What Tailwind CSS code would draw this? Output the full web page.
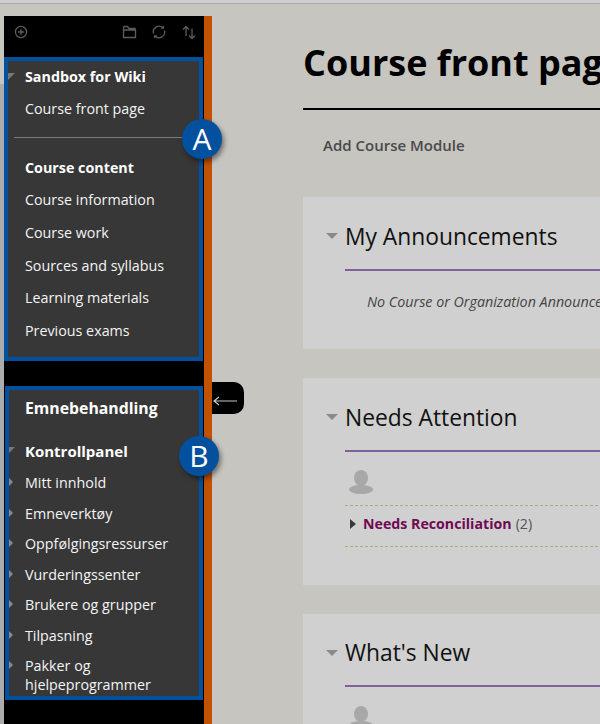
<!DOCTYPE html>
<html lang="en">
<head>
    <meta charset="UTF-8">
    <title>Course front page</title>
    <script src="https://cdn.jsdelivr.net/npm/@tailwindcss/browser@4"></script>
</head>
<body class="w-[600px] h-[724px] overflow-hidden bg-[#c6c5c0] font-['Open_Sans',sans-serif]">

    <!-- top bar -->
    <div class="h-[4px] bg-[#cfcfcf] border-b border-[#a9a9a7]"></div>

    <div class="flex h-[720px] pt-[12px] relative">
        <!-- left edge -->
        <div class="w-[4px] shrink-0 flex flex-col">
            <div class="h-[68px] bg-[#c6c5c0]"></div>
            <div class="flex-1 bg-[#acacac]"></div>
        </div>

        <!-- sidebar -->
        <aside class="w-[200px] shrink-0 bg-black flex flex-col">
            <div class="h-[41px] flex items-start pt-[9px] pl-[10px] pr-[8px] text-[#5c5c5c]">
                <svg class="w-[14px] h-[14px]" viewBox="0 0 14 14" fill="none" stroke="currentColor" stroke-width="1.3"><circle cx="7" cy="7" r="5.6"/><path d="M7 4v6M4 7h6"/></svg>
                <svg class="w-[15px] h-[14px] ml-auto" viewBox="0 0 15 14" fill="none" stroke="currentColor" stroke-width="1.3"><path d="M1.5 12.5V2.5q0-1 1-1h3l1.5 2h5.5q1 0 1 1v8zM1.5 5h12"/></svg>
                <svg class="w-[14px] h-[14px] ml-[15px]" viewBox="0 0 14 14" fill="none" stroke="currentColor" stroke-width="1.3"><path d="M1.6 8.5A5.6 5.6 0 0 1 10.8 2.8M12.4 5.5A5.6 5.6 0 0 1 3.2 11.2"/><path d="M9 3.2h2.4V1M5 10.8H2.6V13"/></svg>
                <svg class="w-[14px] h-[15px] ml-[16px]" viewBox="0 0 14 15" fill="none" stroke="currentColor" stroke-width="1.3"><path d="M4 11V1.5M1 4.5l3-3 3 3M10 3.5v10M7 10.5l3 3 3-3"/></svg>
            </div>

            <!-- box A -->
            <div class="relative h-[304px] mr-[1px] border-[4px] border-[#03509f] bg-[#373737] text-white text-[14.3px]">
                <div class="absolute left-0 top-[12px] w-0 h-0 border-t-[7px] border-t-[#777] border-r-[7px] border-r-transparent"></div>
                <div class="pl-[17px] pt-[5px] h-[30px] font-bold">Sandbox for Wiki</div>
                <div class="pl-[17px] pt-[7px] h-[46px] text-[#f4f4f4]">Course front page</div>
                <div class="h-px ml-[6px] mr-[14px] bg-[#7a7a7a]"></div>
                <div class="pl-[17px] pt-[19px] flex flex-col">
                    <div class="h-[32px] font-bold">Course content</div>
                    <div class="h-[33px] text-[#f4f4f4]">Course information</div>
                    <div class="h-[33px] text-[#f4f4f4]">Course work</div>
                    <div class="h-[32px] text-[#f4f4f4]">Sources and syllabus</div>
                    <div class="h-[33px] text-[#f4f4f4]">Learning materials</div>
                    <div class="h-[32px] text-[#f4f4f4]">Previous exams</div>
                </div>
            </div>

            <div class="h-[25px]"></div>

            <!-- box B -->
            <div class="relative h-[314px] ml-[1px] mr-[1px] border-[4px] border-[#03509f] bg-[#373737] text-white text-[14.3px]">
                <div class="pl-[16px] pt-[7px] h-[50px] text-[15.8px] font-bold">Emnebehandling</div>
                <div class="flex flex-col pl-[16px]">
                    <div class="relative h-[32px] text-[15px] font-bold"><span class="absolute left-[-16px] top-[7px] w-0 h-0 border-t-[6px] border-t-[#777] border-r-[6px] border-r-transparent"></span>Kontrollpanel</div>
                    <div class="relative h-[31px] text-[#f4f4f4]"><span class="absolute left-[-16px] top-[6px] w-0 h-0 border-y-[4px] border-y-transparent border-l-[4px] border-l-[#8a8a8a]"></span>Mitt innhold</div>
                    <div class="relative h-[30px] text-[#f4f4f4]"><span class="absolute left-[-16px] top-[6px] w-0 h-0 border-y-[4px] border-y-transparent border-l-[4px] border-l-[#8a8a8a]"></span>Emneverktøy</div>
                    <div class="relative h-[31px] text-[#f4f4f4]"><span class="absolute left-[-16px] top-[6px] w-0 h-0 border-y-[4px] border-y-transparent border-l-[4px] border-l-[#8a8a8a]"></span>Oppfølgingsressurser</div>
                    <div class="relative h-[30px] text-[#f4f4f4]"><span class="absolute left-[-16px] top-[6px] w-0 h-0 border-y-[4px] border-y-transparent border-l-[4px] border-l-[#8a8a8a]"></span>Vurderingssenter</div>
                    <div class="relative h-[31px] text-[#f4f4f4]"><span class="absolute left-[-16px] top-[6px] w-0 h-0 border-y-[4px] border-y-transparent border-l-[4px] border-l-[#8a8a8a]"></span>Brukere og grupper</div>
                    <div class="relative h-[31px] text-[#f4f4f4]"><span class="absolute left-[-16px] top-[6px] w-0 h-0 border-y-[4px] border-y-transparent border-l-[4px] border-l-[#8a8a8a]"></span>Tilpasning</div>
                    <div class="relative w-[150px] leading-[19px] text-[#f4f4f4]"><span class="absolute left-[-16px] top-[5px] w-0 h-0 border-y-[4px] border-y-transparent border-l-[4px] border-l-[#8a8a8a]"></span>Pakker og hjelpeprogrammer</div>
                </div>
            </div>
        </aside>

        <!-- orange divider -->
        <div class="w-[8px] shrink-0 bg-[#c25100]"></div>

        <!-- collapse tab -->
        <div class="absolute left-[212px] top-[378px] w-[32px] h-[32px] bg-black rounded-r-[10px] flex items-center pl-[1px] pt-[6px]">
            <svg class="w-[24px] h-[10px]" viewBox="0 0 24 10" fill="none" stroke="#c8c8c8" stroke-width="1.2"><path d="M1 5h23M6 1 1 5l5 4"/></svg>
        </div>

        <!-- badges -->
        <div class="absolute left-[182px] top-[115px] w-[40px] h-[40px] rounded-full bg-[#03509f] text-white text-[30px] leading-[40px] text-center shadow-[2px_3px_5px_rgba(0,0,0,0.45)]">A</div>
        <div class="absolute left-[179px] top-[432px] w-[40px] h-[40px] rounded-full bg-[#03509f] text-white text-[30px] leading-[40px] text-center shadow-[2px_3px_5px_rgba(0,0,0,0.45)]">B</div>

        <!-- main -->
        <main class="flex-1 min-w-0 overflow-hidden pl-[91px]">
            <h1 class="pt-[22px] h-[94px] text-[36px] leading-[49px] font-bold text-black whitespace-nowrap border-b-2 border-black w-[320px]">Course front page</h1>
            <div class="h-[87px] pl-[20px] pt-[24px] text-[15px] font-semibold text-[#4a4a4a]">Add Course Module</div>

            <section class="w-[320px] h-[152px] bg-[#d0d0d0] pl-[42px]">
                <div class="relative h-[74px] pt-[22px] text-[22.8px] leading-[36px] text-[#111] whitespace-nowrap border-b-2 border-[#7d6299]">
                    <span class="absolute left-[-19px] top-[36px] w-0 h-0 border-x-[6px] border-x-transparent border-t-[6px] border-t-[#8a8a8a]"></span>My Announcements
                </div>
                <p class="pl-[22px] pt-[20px] text-[14.3px] italic text-[#444] whitespace-nowrap">No Course or Organization Announcements have been posted</p>
            </section>

            <section class="w-[320px] h-[207px] mt-[29px] bg-[#d0d0d0] pl-[42px]">
                <div class="relative h-[74px] pt-[22px] text-[22.8px] leading-[36px] text-[#111] whitespace-nowrap border-b-2 border-[#7d6299]">
                    <span class="absolute left-[-19px] top-[36px] w-0 h-0 border-x-[6px] border-x-transparent border-t-[6px] border-t-[#8a8a8a]"></span>Needs Attention
                </div>
                <div class="h-[54px] pt-[18px] pl-[4px] border-b border-dashed border-[#b0a97c]">
                    <svg class="w-[24px] h-[24px]" viewBox="0 0 24 24" fill="#a8a8a8"><ellipse cx="12" cy="8" rx="7" ry="8"/><ellipse cx="12" cy="19.5" rx="12" ry="4.5"/></svg>
                </div>
                <div class="h-[41px] flex items-center pb-[5px] pl-[5px] text-[14.2px] border-b border-dashed border-[#b0a97c]">
                    <span class="w-0 h-0 border-y-[5.5px] border-y-transparent border-l-[6px] border-l-[#3a3a3a] mr-[7px]"></span>
                    <span class="font-bold text-[#6f0a52]">Needs Reconciliation</span>
                    <span class="ml-[4px] text-[#555]">(2)</span>
                </div>
            </section>

            <section class="w-[320px] h-[120px] mt-[29px] bg-[#d0d0d0] pl-[42px]">
                <div class="relative h-[73px] pt-[21px] text-[22.8px] leading-[36px] text-[#111] whitespace-nowrap border-b-2 border-[#7d6299]">
                    <span class="absolute left-[-19px] top-[36px] w-0 h-0 border-x-[6px] border-x-transparent border-t-[6px] border-t-[#8a8a8a]"></span>What's New
                </div>
                <div class="pt-[19px] pl-[4px]">
                    <svg class="w-[24px] h-[24px]" viewBox="0 0 24 24" fill="#a8a8a8"><ellipse cx="12" cy="8" rx="7" ry="8"/><ellipse cx="12" cy="19.5" rx="12" ry="4.5"/></svg>
                </div>
            </section>
        </main>
    </div>

</body>
</html>
